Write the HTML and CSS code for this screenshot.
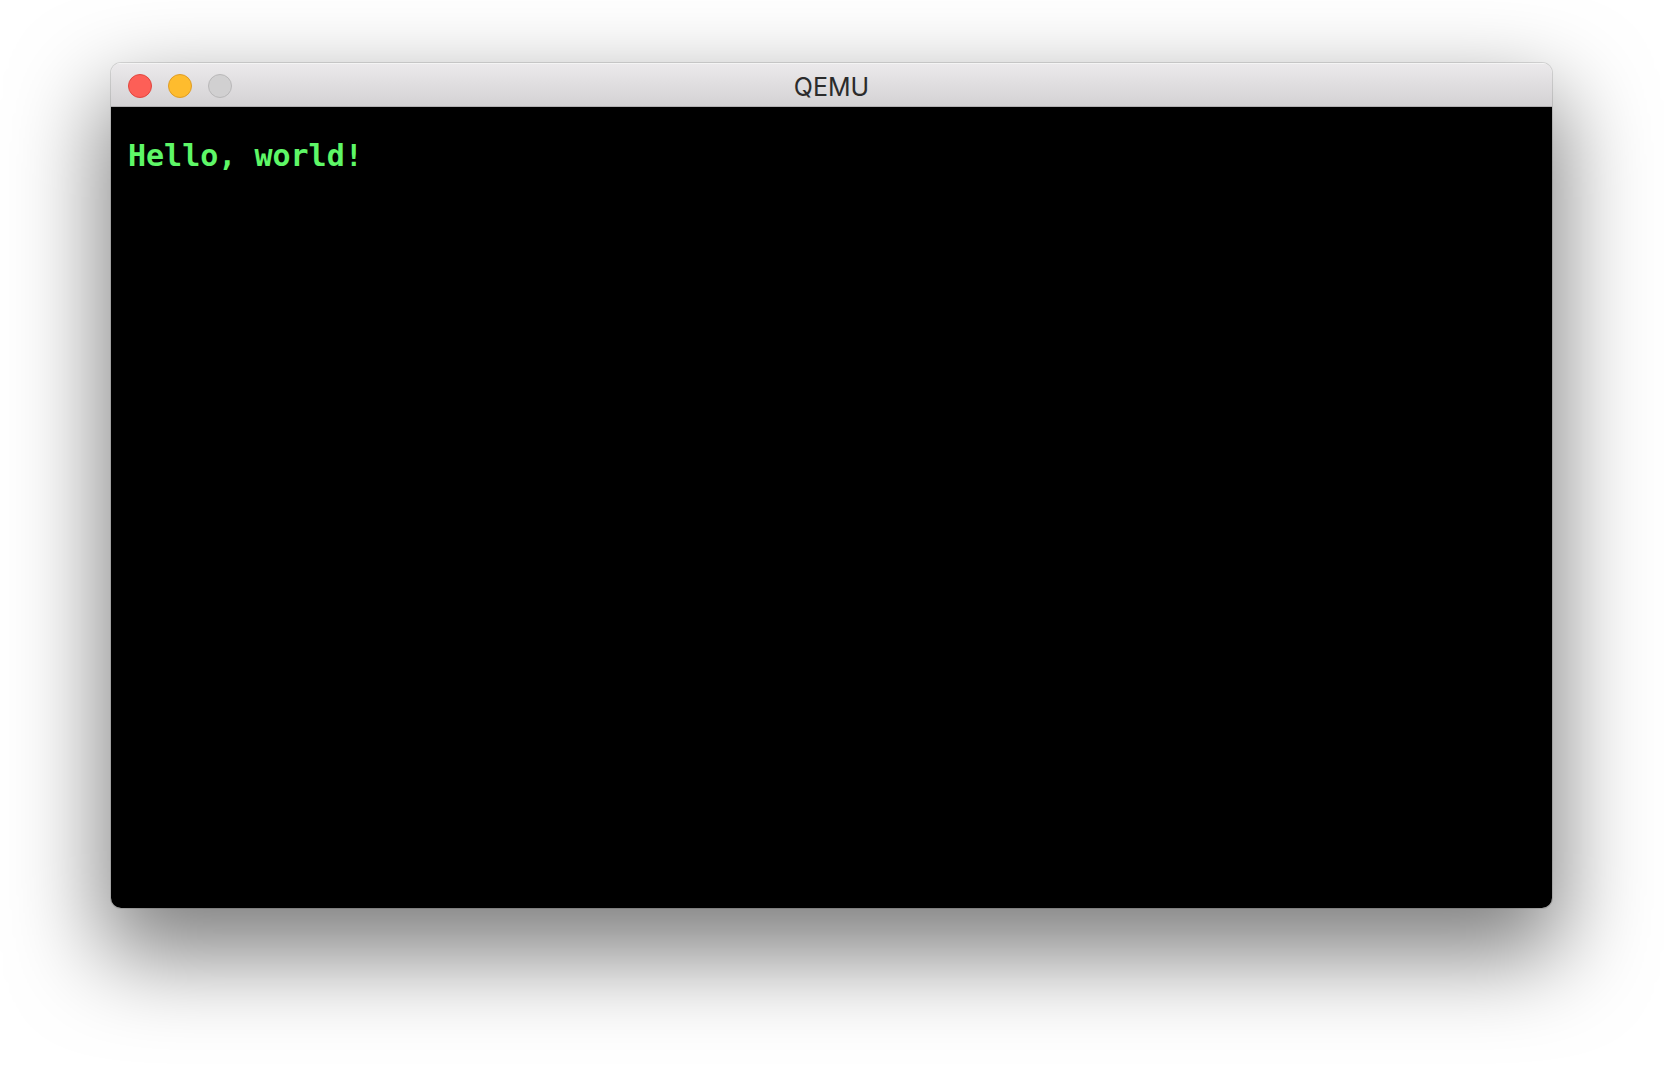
FILE: index.html
```html
<!DOCTYPE html>
<html>
<head>
<meta charset="utf-8">
<title>QEMU</title>
<link rel="stylesheet" href="styles.css">
</head>
<body>
<div class="stage">
  <div class="window">
    <div class="titlebar">
      <div class="lights">
        <span class="light close"></span>
        <span class="light minimize"></span>
        <span class="light zoom"></span>
      </div>
      <div class="title">QEMU</div>
    </div>
    <div class="screen">
      <div class="line">Hello, world!</div>
    </div>
  </div>
</div>
</body>
</html>
```

FILE: styles.css
```css
html, body {
  margin: 0;
  padding: 0;
  background: #ffffff;
}
body {
  width: 1664px;
  height: 1068px;
  overflow: hidden;
}
.stage {
  padding: 63px 112px 0 111px;
}
.window {
  width: 1441px;
  height: 845px;
  border-radius: 10px;
  display: flex;
  flex-direction: column;
  overflow: hidden;
  box-shadow: 0 0 0 1px rgba(0,0,0,0.12), 0 40px 90px 8px rgba(0,0,0,0.5);
}
.titlebar {
  height: 44px;
  flex: 0 0 44px;
  box-sizing: border-box;
  background: linear-gradient(#ebe9eb, #d4d2d4);
  border-top: 1px solid #f4f4f4;
  border-bottom: 1px solid #b2b0b2;
  display: flex;
  align-items: center;
  position: relative;
}
.lights {
  display: flex;
  gap: 16px;
  padding-left: 17px;
  padding-top: 1px;
}
.light {
  width: 22px;
  height: 22px;
  border-radius: 50%;
  display: block;
}
.close {
  background: #fd5f57;
  border: 1px solid #e1463f;
}
.minimize {
  background: #febc2e;
  border: 1px solid #df9d25;
}
.zoom {
  background: #d1d0d1;
  border: 1px solid #b9b8b9;
}
.title {
  position: absolute;
  left: 0;
  right: 0;
  top: 0;
  bottom: 0;
  display: flex;
  align-items: center;
  justify-content: center;
  padding-top: 4px;
  font-family: "Inter", "Liberation Sans", sans-serif;
  font-size: 25px;
  color: #2b2b2b;
}
.screen {
  flex: 1;
  background: #000000;
  padding: 33px 0 0 17px;
}
.line {
  font-family: "DejaVu Sans Mono", monospace;
  font-weight: bold;
  font-size: 30px;
  line-height: 32px;
  color: #5ef767;
  white-space: pre;
}
```
